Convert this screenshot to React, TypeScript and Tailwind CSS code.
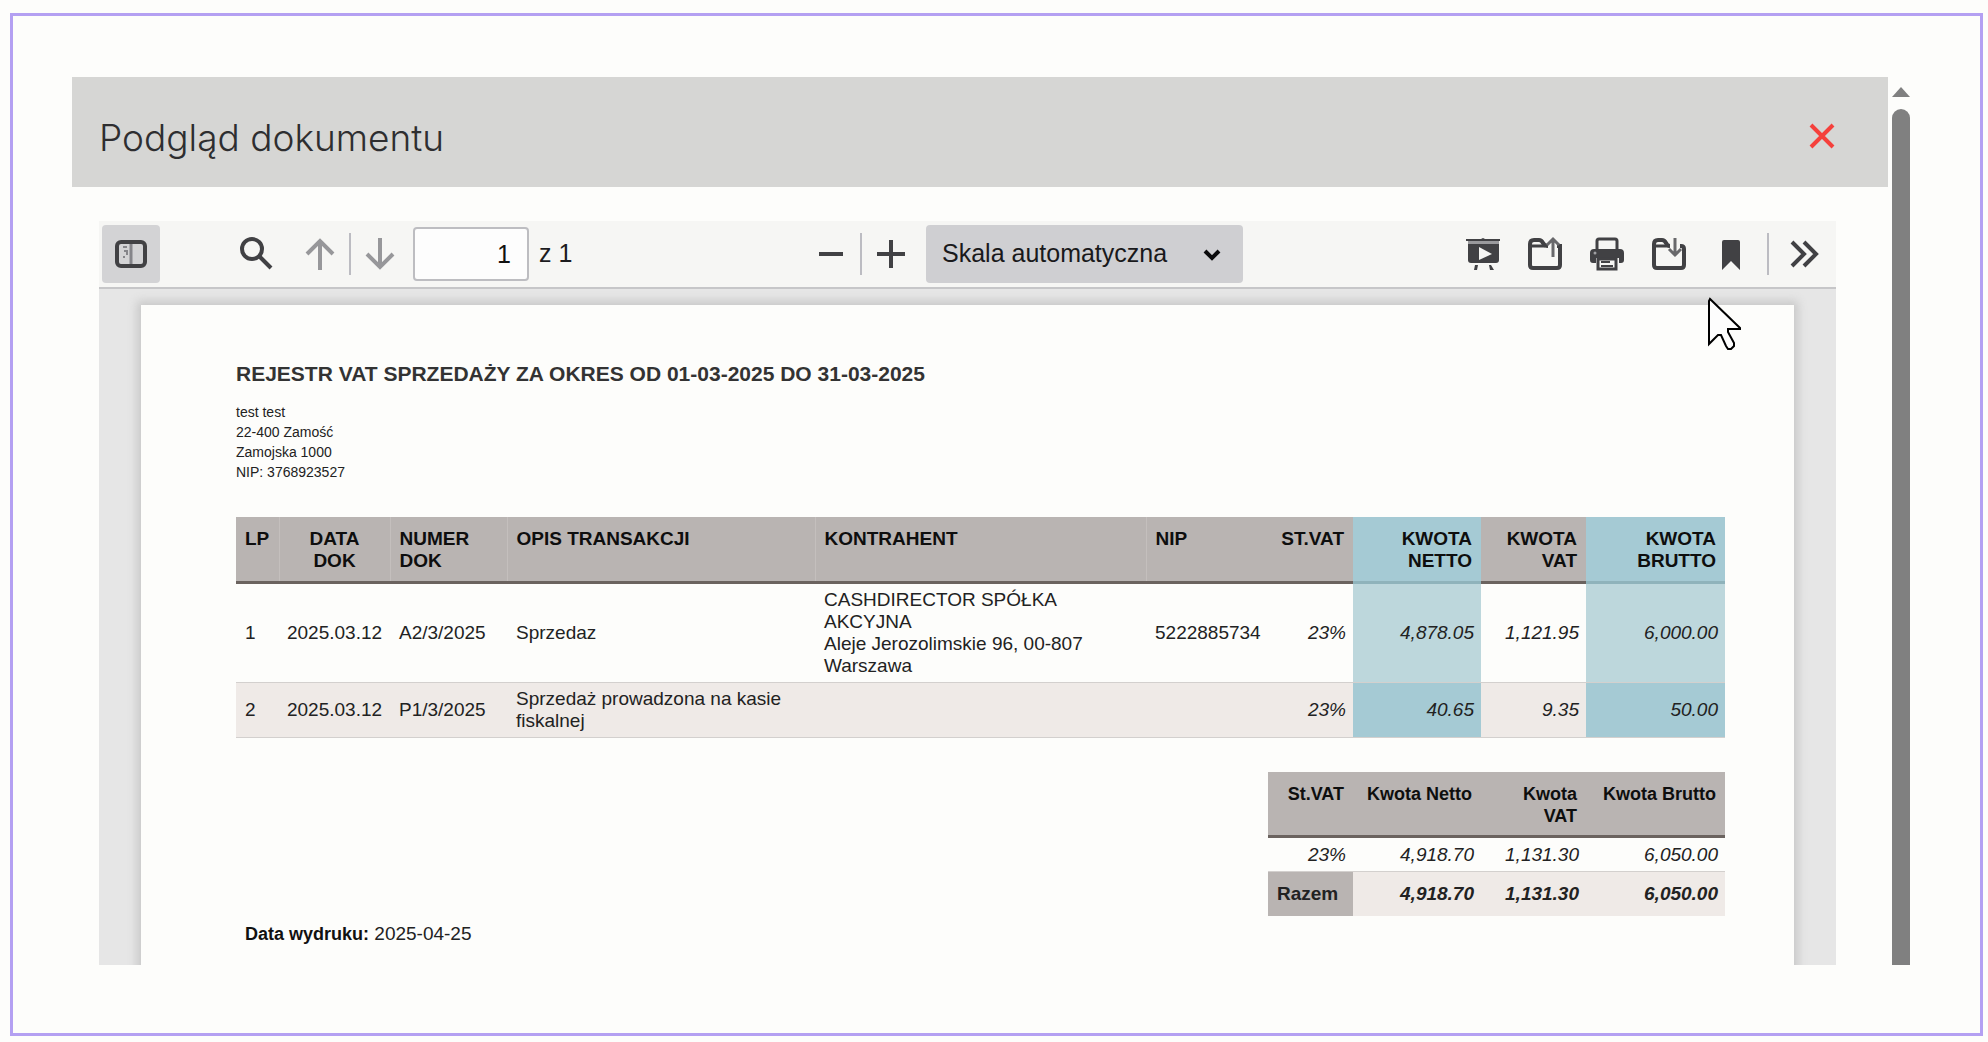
import type { ReactNode } from 'react';

interface ToolButtonProps {
    label: string;
    children: ReactNode;
    active?: boolean;
    disabled?: boolean;
}

interface RegisterRow {
    lp: number;
    date: string;
    number: string;
    description: string;
    contractor: string[];
    nip: string;
    rate: string;
    net: string;
    vat: string;
    gross: string;
}

const rows: RegisterRow[] = [
    {
        lp: 1,
        date: '2025.03.12',
        number: 'A2/3/2025',
        description: 'Sprzedaz',
        contractor: ['CASHDIRECTOR SPÓŁKA', 'AKCYJNA', 'Aleje Jerozolimskie 96, 00-807', 'Warszawa'],
        nip: '5222885734',
        rate: '23%',
        net: '4,878.05',
        vat: '1,121.95',
        gross: '6,000.00'
    },
    {
        lp: 2,
        date: '2025.03.12',
        number: 'P1/3/2025',
        description: 'Sprzedaż prowadzona na kasie fiskalnej',
        contractor: [],
        nip: '',
        rate: '23%',
        net: '40.65',
        vat: '9.35',
        gross: '50.00'
    }
];

const ToolButton = ({ label, children, active = false, disabled = false }: ToolButtonProps) => (
    <button
        type="button"
        aria-label={label}
        title={label}
        disabled={disabled}
        className={`flex h-[58px] w-[58px] shrink-0 items-center justify-center rounded-sm ${active ? 'bg-[#d3d3d5]' : ''} ${disabled ? 'text-[#97979a]' : 'text-[#414144]'}`}
    >
        <svg viewBox="0 0 36 36" className="h-9 w-9" fill="none" stroke="currentColor" strokeWidth="4" aria-hidden="true">
            {children}
        </svg>
    </button>
);

const Separator = () => <div className="h-[42px] w-[2px] shrink-0 bg-[#bcbcc2]" />;

const Toolbar = () => (
    <div className="flex h-[68px] shrink-0 items-center justify-between border-b-2 border-[#c6c6c8] bg-[#f6f6f4] px-[3px]">
        <div className="flex items-center">
            <ToolButton label="Przełącz panel boczny" active>
                <rect x="4" y="6" width="28" height="24" rx="4" />
                <path d="M18 8v20" strokeWidth="3" stroke="#85858a" />
                <path d="M10 11h4M11 15h3v4M10 21h2" strokeWidth="2" stroke="#85858a" />
            </ToolButton>
            <div className="w-[67px]" />
            <ToolButton label="Znajdź">
                <circle cx="14" cy="13" r="10" />
                <path d="M21 20l12 12" />
            </ToolButton>
            <div className="w-[6px]" />
            <ToolButton label="Poprzednia strona" disabled>
                <path d="M18 34V5M5 18L18 5l13 13" />
            </ToolButton>
            <Separator />
            <ToolButton label="Następna strona" disabled>
                <path d="M18 2v29M5 18l13 13 13-13" />
            </ToolButton>
            <input
                type="text"
                defaultValue="1"
                aria-label="Numer strony"
                className="ml-1 h-[54px] w-[116px] rounded border-2 border-[#bdbdc1] bg-[#fdfdfd] px-4 text-right text-[25px] text-[#111]"
            />
            <span className="ml-[10px] w-[52px] text-[25px] text-[#1c1c1e]">z 1</span>
        </div>

        <div className="flex items-center">
            <ToolButton label="Pomniejsz">
                <path d="M6 18h24" />
            </ToolButton>
            <Separator />
            <ToolButton label="Powiększ">
                <path d="M4 18h28M18 4v28" />
            </ToolButton>
            <div className="relative ml-[6px]">
                <select
                    aria-label="Skala"
                    className="h-[58px] w-[317px] appearance-none rounded-sm bg-[#cfcfd2] pl-4 text-[25px] text-[#19191b]"
                >
                    <option>Skala automatyczna</option>
                </select>
                <svg viewBox="0 0 20 14" className="pointer-events-none absolute top-[23px] right-[21px] h-[14px] w-5" aria-hidden="true">
                    <path d="M3 3l7 7 7-7" fill="none" stroke="#0c0c0d" strokeWidth="4" />
                </svg>
            </div>
        </div>

        <div className="flex items-center">
            <div className="mr-[7px] flex gap-1">
                <ToolButton label="Tryb prezentacji">
                    <g stroke="none" fill="currentColor">
                        <path d="M16 3l2-1 2 1h15v2H1V3z" />
                        <path d="M3 5h31v3H3z" fill="#9a9a9d" />
                        <path d="M3 8h31v16q0 3-3 3H6q-3 0-3-3z" />
                        <path d="M10 29h3l-1 5H9zM24 29h2l3 5h-4z" />
                        <path d="M14 11l13 7-13 6z" fill="#f6f6f4" />
                    </g>
                </ToolButton>
                <ToolButton label="Otwórz">
                    <path d="M21 10c-3 0-4-1-5-3-1-2-2-3-4-3H7Q3 4 3 8v21q0 3 3 3h24q3 0 3-3V10h-3" />
                    <path d="M5 10h13" strokeWidth="3" />
                    <path d="M26 21V4M20 9l6-6 6 6" strokeWidth="3" stroke="#68686b" />
                </ToolButton>
                <ToolButton label="Drukuj">
                    <path d="M8 14V5q0-2 2-2h16q2 0 2 2v9" strokeWidth="3" />
                    <path
                        d="M1 17q0-4 4-4h26q4 0 4 4v7q0 3-3 3h-2v-5H7v5H4q-3 0-3-3z"
                        fill="currentColor"
                        stroke="none"
                    />
                    <path d="M9 23h18v10H9z" strokeWidth="3" fill="#f6f6f4" />
                    <path d="M12 26h9M12 30h12" strokeWidth="2" />
                    <circle cx="6" cy="17" r="1.5" fill="#a0a0a3" stroke="none" />
                </ToolButton>
                <ToolButton label="Zapisz">
                    <path d="M19 10c-2 0-3-1-4-3-1-2-2-3-4-3H7Q3 4 3 8v21q0 3 3 3h24q3 0 3-3V13q0-3-3-3h-1" />
                    <path d="M5 10h13" strokeWidth="3" />
                    <path d="M24 2v17M18 13l6 6 6-6" strokeWidth="3" stroke="#68686b" />
                </ToolButton>
                <ToolButton label="Bieżąca strona">
                    <path d="M9 6q0-2 2-2h14q2 0 2 2v28l-9-9-9 9z" fill="currentColor" stroke="none" />
                </ToolButton>
            </div>
            <Separator />
            <div className="w-[6px]" />
            <ToolButton label="Narzędzia">
                <path d="M6 6l12 12L6 30M18 6l12 12-12 12" />
            </ToolButton>
        </div>
    </div>
);

const RegisterTable = () => (
    <table className="mt-[35px] w-full table-fixed border-collapse text-[19px] leading-[22px]">
        <colgroup>
            <col className="w-[43px]" />
            <col className="w-[111px]" />
            <col className="w-[117px]" />
            <col className="w-[308px]" />
            <col className="w-[331px]" />
            <col className="w-[122px]" />
            <col className="w-[85px]" />
            <col className="w-[128px]" />
            <col className="w-[105px]" />
            <col className="w-[139px]" />
        </colgroup>
        <thead>
            <tr className="h-[65px] bg-[#b9b4b2] text-left align-top text-[#0e0e0e] [&>th]:border-b-3 [&>th]:border-b-[#6b635f] [&>th]:px-[9px] [&>th]:pt-[11px]">
                <th className="border-r border-r-[#c4bfbd]">LP</th>
                <th className="border-r border-r-[#c4bfbd] text-center">DATA<br />DOK</th>
                <th className="border-r border-r-[#c4bfbd]">NUMER<br />DOK</th>
                <th className="border-r border-r-[#c4bfbd]">OPIS TRANSAKCJI</th>
                <th className="border-r border-r-[#c4bfbd]">KONTRAHENT</th>
                <th>NIP</th>
                <th className="text-right">ST.VAT</th>
                <th className="border-b-[#8fb3bb]! bg-[#a5cad4] text-right">KWOTA<br />NETTO</th>
                <th className="text-right">KWOTA<br />VAT</th>
                <th className="border-b-[#8fb3bb]! bg-[#a5cad4] text-right">KWOTA<br />BRUTTO</th>
            </tr>
        </thead>
        <tbody>
            {rows.map((row, index) => {
                const tint = index % 2 ? 'bg-[#a5cad4]' : 'bg-[#bdd7dc]';
                return (
                    <tr key={row.lp} className={`border-b border-[#d3d0ce] ${index % 2 ? 'bg-[#efeae7]' : ''}`}>
                        <td className="px-[9px] py-[5px]">{row.lp}</td>
                        <td className="text-center">{row.date}</td>
                        <td className="px-[9px]">{row.number}</td>
                        <td className="px-[9px] py-[5px]">{row.description}</td>
                        <td className="px-[9px] py-[5px]">
                            {row.contractor.map((line) => (
                                <div key={line}>{line}</div>
                            ))}
                        </td>
                        <td className="px-[9px]">{row.nip}</td>
                        <td className="px-[7px] text-right italic">{row.rate}</td>
                        <td className={`px-[7px] text-right italic ${tint}`}>{row.net}</td>
                        <td className="px-[7px] text-right italic">{row.vat}</td>
                        <td className={`px-[7px] text-right italic ${tint}`}>{row.gross}</td>
                    </tr>
                );
            })}
        </tbody>
    </table>
);

const SummaryTable = () => (
    <table className="mt-[34px] ml-auto w-[457px] table-fixed border-collapse text-right text-[19px] leading-[22px]">
        <colgroup>
            <col className="w-[85px]" />
            <col className="w-[128px]" />
            <col className="w-[105px]" />
            <col className="w-[139px]" />
        </colgroup>
        <thead>
            <tr className="h-[65px] border-b-3 border-[#6b635f] bg-[#b9b4b2] align-top text-lg leading-[22px] text-[#0e0e0e] [&>th]:px-[9px] [&>th]:pt-[11px]">
                <th>St.VAT</th>
                <th>Kwota Netto</th>
                <th>Kwota<br />VAT</th>
                <th>Kwota Brutto</th>
            </tr>
        </thead>
        <tbody className="italic">
            <tr className="h-[35px] border-b border-[#d3d0ce]">
                <td className="px-[7px]">23%</td>
                <td className="px-[7px]">4,918.70</td>
                <td className="px-[7px]">1,131.30</td>
                <td className="px-[7px]">6,050.00</td>
            </tr>
            <tr className="h-[44px] bg-[#efeae7] font-bold">
                <th className="bg-[#b9b4b2] px-[9px] text-left not-italic">Razem</th>
                <td className="px-[7px]">4,918.70</td>
                <td className="px-[7px]">1,131.30</td>
                <td className="px-[7px]">6,050.00</td>
            </tr>
        </tbody>
    </table>
);

const MouseCursor = () => (
    <svg viewBox="0 0 36 54" className="absolute top-[76px] right-[93px] h-[54px] w-9" aria-hidden="true">
        <path
            d="M3 2L2 4v43l9-9h3l5 11 2 3h3l3-3v-3l-6-11v-3h12v-1z"
            fill="#fdfdfd"
            stroke="#000"
            strokeWidth="2"
        />
    </svg>
);

const App = () => {
    return (
        <div className="flex h-screen bg-[#fdfdfb] pt-[13px] pr-[5px] pb-[6px] pl-[10px] font-['Liberation_Sans',Arial,sans-serif] text-[#222]">
            <main className="flex flex-1 border-[3px] border-[#b4a0f2] pt-[61px] pr-[66px] pb-[68px] pl-[59px]">
                <div className="flex min-w-0 flex-1 flex-col">
                    <header className="flex h-[110px] shrink-0 items-center justify-between bg-[#d6d6d4] pr-[53px] pl-[27px]">
                        <h1 className="pt-3 font-['Inter',sans-serif] text-[37px] font-light text-[#2e2e30]">Podgląd dokumentu</h1>
                        <button type="button" aria-label="Zamknij" className="pt-2">
                            <svg viewBox="0 0 26 26" className="h-[26px] w-[26px]" aria-hidden="true">
                                <path d="M2 2l22 22M24 2L2 24" stroke="#f5403b" strokeWidth="4" />
                            </svg>
                        </button>
                    </header>

                    <section className="relative mt-[34px] mr-[52px] ml-[27px] flex min-h-0 flex-1 flex-col">
                        <Toolbar />
                        <div className="min-h-0 flex-1 overflow-hidden bg-[#e6e6e6] pt-4 pr-[42px] pl-[42px]">
                            <article className="h-[1800px] bg-[#fdfdfb] pt-[57px] pr-[69px] pl-[95px] shadow-[0_0_9px_4px_#c8c8c8]">
                                <h2 className="text-[21px] leading-6 font-bold text-[#333]">
                                    REJESTR VAT SPRZEDAŻY ZA OKRES OD 01-03-2025 DO 31-03-2025
                                </h2>
                                <address className="mt-4 text-sm leading-5 not-italic">
                                    test test<br />
                                    22-400 Zamość<br />
                                    Zamojska 1000<br />
                                    NIP: 3768923527
                                </address>
                                <RegisterTable />
                                <SummaryTable />
                                <p className="mt-[7px] pl-[9px] text-[19px] leading-[22px]">
                                    <b className="text-lg leading-[22px] text-[#111]">Data wydruku:</b> 2025-04-25
                                </p>
                            </article>
                        </div>
                        <MouseCursor />
                    </section>
                </div>

                <div className="flex w-[26px] shrink-0 flex-col items-center pt-[10px]" aria-hidden="true">
                    <svg viewBox="0 0 18 10" className="h-[10px] w-[18px]">
                        <path d="M9 0l9 10H0z" fill="#808080" />
                    </svg>
                    <div className="mt-3 w-[18px] flex-1 rounded-t-full bg-[#808080]" />
                </div>
            </main>
        </div>
    );
};

export default App;
